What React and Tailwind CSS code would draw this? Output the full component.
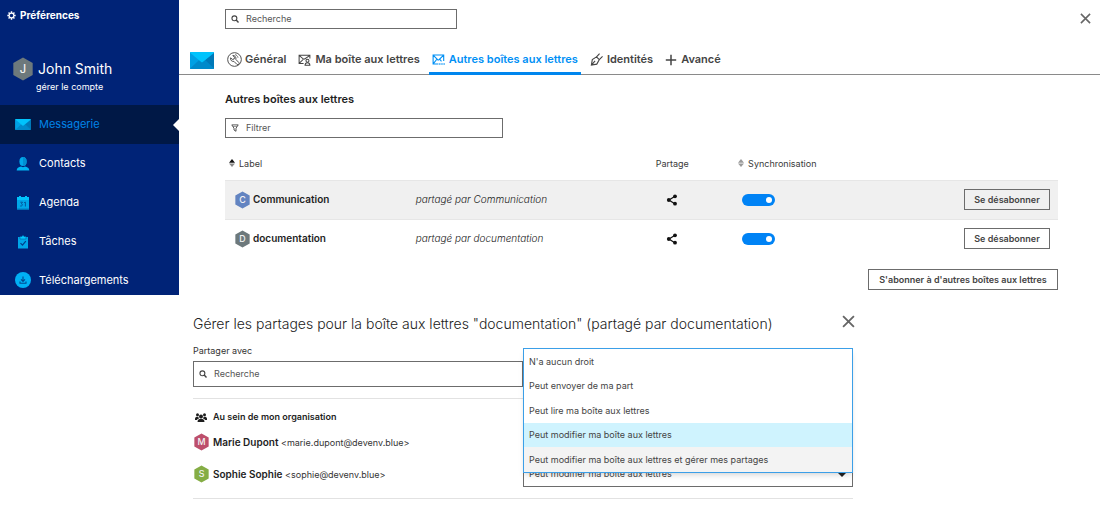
import React, { useState } from "react";

function Hexagon({ letter, color, className, textSize = 12 }) {
  return (
    <svg viewBox="0 0 22 26" className={className} role="img" aria-label={letter}>
      <path d="M11 .5 21.5 6.5v13L11 25.5.5 19.5v-13z" fill={color} />
      <text x="11" y="17.4" textAnchor="middle" fontSize={textSize} fontWeight="500" fill="#f3f3f3" fontFamily="Inter, sans-serif">
        {letter}
      </text>
    </svg>
  );
}

function Envelope({ className }) {
  return (
    <svg viewBox="0 0 24 17" className={className} aria-hidden="true">
      <rect width="24" height="17" rx="1" fill="#0096dc" />
      <path d="M0 16.5 9 8h6l9 8.500V17H0z" fill="#008acb" />
      <path d="M0 1v15.500L9 8z" fill="#00a0e4" />
      <path d="M24 1v15.500L15 8z" fill="#0079b8" />
      <path d="M0 .8A.8.800 0 0 1 .8 0h22.400a.8.800 0 0 1 .8.800L12.800 10a1.300 1.300 0 0 1-1.600 0z" fill="#00c3fc" />
    </svg>
  );
}

function ContactIcon({ className }) {
  return (
    <svg viewBox="0 0 16 16" className={className} aria-hidden="true">
      <ellipse cx="8" cy="5.500" rx="3.600" ry="4.500" fill="#00a8ea" />
      <path d="M8 1a3.600 4.500 0 0 1 0 9z" fill="#0090d2" />
      <path d="M1.700 14.500c0-2.800 2-3.500 4.300-4l2 .8 2-.8c2.300.5 4.300 1.200 4.300 4z" fill="#00b4f2" />
    </svg>
  );
}

function AgendaIcon({ className }) {
  return (
    <svg viewBox="0 0 16 16" className={className} aria-hidden="true">
      <path d="M2 3h12v11.500H2z" fill="#00a6e8" />
      <path d="M2 2h2V1h2v1h4V1h2v1h2v3H2z" fill="#00c3fc" />
      <path d="M2 13.500h12v1H2z" fill="#007fbf" />
      <path d="M5.300 7.200h2.200L6.400 8.800c1.600.1 1.400 2.700-1.200 2.200M9.100 7.700l1.300-.6v4.400" fill="none" stroke="#00589c" />
    </svg>
  );
}

function TaskIcon({ className }) {
  return (
    <svg viewBox="0 0 16 16" className={className} aria-hidden="true">
      <path d="M3 3h10v11.500H3z" fill="#00a6e8" />
      <path d="M5 2.500h2a1 1 0 0 1 2 0h2V5H5z" fill="#00c9ff" stroke="#004d98" strokeWidth=".5" />
      <path d="m5.500 9.200 2 2 3.300-4" fill="none" stroke="#003f89" strokeWidth="1.200" />
    </svg>
  );
}

function DownloadIcon({ className }) {
  return (
    <svg viewBox="0 0 16 16" className={className} aria-hidden="true">
      <circle cx="8" cy="8" r="8" fill="#00b0f5" />
      <path d="M8 4.500v4.700M6 7.400l2 2 2-2M5 9.500v1.700h6V9.500" fill="none" stroke="#00488f" strokeWidth="1.100" />
    </svg>
  );
}

function GearIcon({ className }) {
  return (
    <svg viewBox="0 0 16 16" className={className} fill="none" stroke="currentColor" aria-hidden="true">
      <circle cx="8" cy="8" r="4.200" strokeWidth="2" />
      <path d="M8 .6v3M8 12.400v3M.6 8h3M12.400 8h3M2.800 2.800l2 2M11.200 11.200l2 2M13.200 2.800l-2 2M4.800 11.200l-2 2" strokeWidth="2.600" />
    </svg>
  );
}

function SearchIcon({ className }) {
  return (
    <svg viewBox="0 0 16 16" className={className} fill="none" stroke="currentColor" aria-hidden="true">
      <circle cx="6.800" cy="6.600" r="4.900" strokeWidth="2.200" />
      <path d="m10.400 10.200 4.600 4.800" strokeWidth="2.800" />
    </svg>
  );
}

function FilterIcon({ className }) {
  return (
    <svg viewBox="0 0 16 16" className={className} fill="none" stroke="currentColor" strokeWidth="1.800" aria-hidden="true">
      <path d="M1.600 1.800h12.800L10 8.500v6L6 12V8.500z" />
      <path d="M4 5h8" strokeWidth="1" />
    </svg>
  );
}

function CrossIcon({ className }) {
  return (
    <svg viewBox="0 0 12 12" className={className} fill="none" stroke="currentColor" aria-hidden="true">
      <path d="m1 1 10 10M11 1 1 11" strokeWidth="1.700" />
    </svg>
  );
}

function WrenchIcon({ className }) {
  return (
    <svg viewBox="0 0 16 16" className={className} fill="none" stroke="currentColor" aria-hidden="true">
      <circle cx="8" cy="8" r="7.300" strokeWidth="1" />
      <path
        d="M6.200 3.800 8 5.600 7.600 7.500l-1.900.4L3.900 6.200c-.7 2.200 1.200 4.300 3.500 3.800l3.300 3.300c1.300 1 3-.8 2-2L9.500 8c.5-2.600-1.300-4.600-3.300-4.200z"
        strokeWidth="1"
      />
      <path d="M8.600 2.800c1.600.3 2.900 1.600 3.100 3.300" strokeWidth=".8" />
    </svg>
  );
}

function MyMailboxIcon({ className }) {
  return (
    <svg viewBox="0 0 14 14" className={className} fill="none" stroke="currentColor" strokeWidth="1.100" aria-hidden="true">
      <path d="M6 11.300H1.200V2.500h11.600V6M1.500 2.800 5.800 6.500h1.400l5.300-3.700M1.500 11l4-4" />
      <circle cx="10.200" cy="8.300" r="1.600" />
      <path d="M7.600 13.300c.1-3.700 5.100-3.700 5.200 0z" />
    </svg>
  );
}

function OtherMailboxesIcon({ className }) {
  return (
    <svg viewBox="0 0 14 14" className={className} fill="none" stroke="currentColor" strokeWidth="1.200" aria-hidden="true">
      <path d="M7 11.800H1.200V2.200h11.400v6.500M1.500 2.500l4.800 5h1l5-5M1.500 11.400 5 7M8.600 7l1.600 2" />
      <path d="M7.800 11.800h1.300M10.100 11.800h1.300M12.400 11.800h1.300" strokeWidth="1.600" />
    </svg>
  );
}

function PenIcon({ className }) {
  return (
    <svg viewBox="0 0 14 14" className={className} fill="none" stroke="currentColor" strokeWidth="1.200" aria-hidden="true">
      <path d="M1.500 13 2.500 7 7 4.200l3 3L7.300 12zM1.500 13l4-4.500" />
      <path d="m7 4.200 3.300-3.500M10 7.200l3.500-3.500" />
    </svg>
  );
}

function PlusIcon({ className }) {
  return (
    <svg viewBox="0 0 12 12" className={className} fill="none" stroke="currentColor" aria-hidden="true">
      <path d="M6 .8v10.400M.8 6h10.400" strokeWidth="1.500" />
    </svg>
  );
}

function ShareIcon({ className }) {
  return (
    <svg viewBox="0 0 12 12" className={className} aria-hidden="true">
      <path d="M9 2.200 3 6l6 4" fill="none" stroke="currentColor" strokeWidth="1.200" />
      <circle cx="9" cy="2.300" r="1.900" fill="currentColor" />
      <circle cx="2.800" cy="6" r="1.900" fill="currentColor" />
      <circle cx="9" cy="9.700" r="1.900" fill="currentColor" />
    </svg>
  );
}

function SortIcon({ up = "#9a9a9a", down = "#9a9a9a" }) {
  return (
    <svg viewBox="0 0 6 8" className="h-2 w-1.5 shrink-0" aria-hidden="true">
      <path d="M3 0 6 3.800H0z" fill={up} />
      <path d="M3 8 6 4.400H0z" fill={down} />
    </svg>
  );
}

function PeopleIcon({ className }) {
  return (
    <svg viewBox="0 0 24 18" className={className} fill="currentColor" aria-hidden="true">
      <circle cx="12" cy="7" r="4" />
      <path d="M5 18c0-5 3-6.500 7-6.500s7 1.500 7 6.500z" />
      <circle cx="5" cy="3.500" r="3" />
      <circle cx="19" cy="3.500" r="3" />
      <path d="M0 11.500C0 8.500 2 7.300 5 7.300h1.800c0 1.500.5 2.800 1.300 3.700C6 11.700 4.500 12.600 3.800 14H0zM24 11.500c0-3-2-4.200-5-4.200h-1.800c0 1.500-.5 2.800-1.300 3.700 2.100.7 3.600 1.600 4.300 3H24z" />
    </svg>
  );
}

const apps = [
  { name: "Messagerie", icon: Envelope, size: "w-4 h-[11px]", active: true },
  { name: "Contacts", icon: ContactIcon, size: "size-4" },
  { name: "Agenda", icon: AgendaIcon, size: "size-4" },
  { name: "Tâches", icon: TaskIcon, size: "size-4" },
  { name: "Téléchargements", icon: DownloadIcon, size: "size-4" },
];

const tabs = [
  { name: "Général", icon: WrenchIcon, size: "size-[15px]", gap: "gap-[3px]" },
  { name: "Ma boîte aux lettres", icon: MyMailboxIcon, size: "size-[13px]", gap: "gap-1" },
  { name: "Autres boîtes aux lettres", icon: OtherMailboxesIcon, size: "size-[13px]", gap: "gap-1", active: true },
  { name: "Identités", icon: PenIcon, size: "size-[13px]", gap: "gap-1" },
  { name: "Avancé", icon: PlusIcon, size: "size-3", gap: "gap-1" },
];

const mailboxes = [
  { name: "Communication", letter: "C", color: "#6384c1", row: "bg-[#f0f0f0] border-y border-[#e6e6e6]" },
  { name: "documentation", letter: "D", color: "#6d797c", row: "" },
];

const people = [
  { name: "Marie Dupont", email: "marie.dupont@devenv.blue", letter: "M", color: "#bd4f6c" },
  { name: "Sophie Sophie", email: "sophie@devenv.blue", letter: "S", color: "#85ad45" },
];

const rights = [
  "N'a aucun droit",
  "Peut envoyer de ma part",
  "Peut lire ma boîte aux lettres",
  "Peut modifier ma boîte aux lettres",
  "Peut modifier ma boîte aux lettres et gérer mes partages",
];

function Sidebar() {
  return (
    <aside className="w-[179px] shrink-0 bg-[#002377] text-white">
      <h1 className="flex h-[30px] items-center gap-1 pl-[7px] text-[10px] font-bold">
        <GearIcon className="size-[9px]" />
        Préférences
      </h1>
      <div className="flex h-[75px] items-start gap-1 pt-[27px] pl-3">
        <Hexagon letter="J" color="#6d797c" className="h-6 w-[22px]" />
        <div className="leading-none">
          <div className="text-[14px] leading-6">John Smith</div>
          <a href="#compte" className="-ml-0.5 block text-[9px] leading-3">gérer le compte</a>
        </div>
      </div>
      <nav>
        {apps.map(({ name, icon: Icon, size, active }) => (
          <a
            key={name}
            href={"#" + name}
            className={
              "relative flex h-[39px] items-center gap-2 pl-[15px] text-[11px] last:h-[34px] last:pt-1 " +
              (active ? "bg-[#001846] text-[#0084e8]" : "")
            }
          >
            <Icon className={"shrink-0 " + size} />
            {name}
            {active && (
              <svg viewBox="0 0 6 12" className="absolute right-0 h-3 w-1.5" aria-hidden="true">
                <path d="M6 0v12L0 6z" fill="#fff" />
              </svg>
            )}
          </a>
        ))}
      </nav>
    </aside>
  );
}

function Field({ icon: Icon, label, className }) {
  return (
    <label className={"flex items-center gap-[7px] border border-[#6c6c6c] bg-white px-[5px] text-[#444] " + className}>
      <Icon className="size-2 shrink-0" />
      <input
        type="text"
        aria-label={label}
        placeholder={label}
        className="min-w-0 flex-1 text-[9px] outline-none placeholder:text-[#555]"
      />
    </label>
  );
}

function Toggle({ label }) {
  return (
    <input
      type="checkbox"
      aria-label={label}
      defaultChecked
      className="flex h-3 w-[33px] appearance-none items-center rounded-full bg-[#9a9a9a] px-[3px] before:size-1.5 before:rounded-full before:bg-white checked:justify-end checked:bg-[#0083f5]"
    />
  );
}

function MailboxTable() {
  return (
    <table className="mt-[9px] w-full table-fixed border-collapse text-[9px] text-[#3a3a3a]">
      <colgroup>
        <col className="w-[22.9%]" />
        <col className="w-[27.6%]" />
        <col className="w-[11.1%]" />
        <col className="w-[14%]" />
        <col />
      </colgroup>
      <thead>
        <tr className="h-[33px] text-left">
          <th className="pl-1 font-normal">
            <button type="button" className="flex items-center gap-1"><SortIcon up="#111" down="#8a8a8a" />Label</button>
          </th>
          <th aria-label="Propriétaire" />
          <th className="pl-2.5 font-normal">Partage</th>
          <th className="font-normal">
            <button type="button" className="flex items-center gap-1"><SortIcon />Synchronisation</button>
          </th>
          <th aria-label="Actions" />
        </tr>
      </thead>
      <tbody>
        {mailboxes.map((m) => (
          <tr key={m.name} className={"h-[39px] " + m.row}>
            <td className="pl-2.5">
              <div className="flex items-center gap-[3px] text-[10px] font-semibold text-[#1e1e1e]">
                <Hexagon letter={m.letter} color={m.color} className="h-[18px] w-[15px] shrink-0" textSize={13} />
                {m.name}
              </div>
            </td>
            <td className="text-[10px] font-light text-[#222] italic">partagé par {m.name}</td>
            <td className="pl-5">
              <button type="button" aria-label={"Partager " + m.name} className="flex text-[#111]">
                <ShareIcon className="size-3" />
              </button>
            </td>
            <td className="pl-1"><Toggle label={"Synchroniser " + m.name} /></td>
            <td className="pr-2">
              <button type="button" className="ml-auto block h-[21px] w-[86px] border border-[#6c6c6c] text-[9px] font-semibold text-[#444]">
                Se désabonner
              </button>
            </td>
          </tr>
        ))}
      </tbody>
    </table>
  );
}

function Preferences() {
  return (
    <main className="min-w-0 flex-1">
      <div className="flex h-[37px] items-center justify-between pr-[9px] pl-[46px]">
        <Field icon={SearchIcon} label="Recherche" className="h-5 w-[232px]" />
        <button type="button" aria-label="Fermer les préférences" className="text-[#666]"><CrossIcon className="size-[11px]" /></button>
      </div>
      <div className="flex h-[38px] items-stretch gap-1.5 border-b border-[#8a8a8a] pl-[11px]">
        <Envelope className="mr-1 mb-[5px] h-[17px] w-6 shrink-0 self-end" />
        {tabs.map(({ name, icon: Icon, size, gap, active }) => (
          <button
            key={name}
            type="button"
            className={
              "-mb-px flex items-center border-b-[3px] px-[3px] pt-2.5 text-[11px] font-semibold whitespace-nowrap " + gap +
              (active ? " border-[#0086ee] text-[#0090f5]" : " border-transparent text-[#444]")
            }
          >
            <Icon className={"shrink-0 " + size} />
            {name}
          </button>
        ))}
      </div>
      <div className="flex flex-col pr-[42px] pb-1 pl-[46px]">
        <h2 className="mt-4 text-[11px] leading-4 font-semibold text-[#1e1e1e]">Autres boîtes aux lettres</h2>
        <Field icon={FilterIcon} label="Filtrer" className="mt-[11px] h-5 w-[278px]" />
        <MailboxTable />
        <button type="button" className="mt-[11px] h-[21px] w-[190px] self-end border border-[#6c6c6c] text-[9px] font-semibold whitespace-nowrap text-[#444]">
          S'abonner à d'autres boîtes aux lettres
        </button>
      </div>
    </main>
  );
}

function RightsMenu({ value, onPick }) {
  return (
    <div role="listbox" aria-label="Droits" className="absolute inset-x-0 bottom-[14px] z-10 flex h-[125px] flex-col border border-[#3b9fe8] bg-white shadow-md">
      {rights.map((right) => (
        <button
          key={right}
          type="button"
          role="option"
          aria-selected={right === value}
          onClick={() => onPick(right)}
          className="flex flex-1 items-center pl-[5px] text-left text-[9px] text-[#444] last:bg-[#f3f3f3] aria-selected:bg-[#cff3fe]"
        >
          {right}
        </button>
      ))}
    </div>
  );
}

function SharingPanel() {
  const [value, setValue] = useState(rights[3]);
  return (
    <section className="ml-[193px] w-3/5 text-[#333]">
      <div className="flex items-center justify-between pt-[17px]">
        <h2 className="text-[14px] leading-6 font-light whitespace-nowrap text-[#222]">
          Gérer les partages pour la boîte aux lettres "documentation" (partagé par documentation)
        </h2>
        <button type="button" aria-label="Fermer" className="-mr-0.5 mb-1.5 text-[#666]"><CrossIcon className="size-[13px]" /></button>
      </div>
      <div className="mt-[9px] text-[9px] leading-3">Partager avec</div>
      <Field icon={SearchIcon} label="Recherche" className="mt-1 h-[26px] w-1/2" />
      <div className="mt-[11px] border-y border-[#e2e2e2] pb-[11px]">
        <h3 className="mt-2.5 flex items-center gap-1.5 text-[9px] leading-4 font-semibold text-[#1e1e1e]">
          <PeopleIcon className="ml-0.5 h-[9px] w-3" />
          Au sein de mon organisation
        </h3>
        {people.map((p, i) => (
          <div key={p.name} className={i === 0 ? "mt-1 flex h-[26px]" : "mt-1.5 flex h-[26px]"}>
            <div className="flex w-1/2 items-center pl-px text-[9px]">
              <Hexagon letter={p.letter} color={p.color} className="mr-1 h-[18px] w-[15px] shrink-0" textSize={13} />
              <span><b className="text-[10px] font-semibold text-[#1e1e1e]">{p.name}</b> &lt;{p.email}&gt;</span>
            </div>
            {i === 1 && (
              <div className="relative w-1/2">
                <select
                  aria-label={"Droits de " + p.name}
                  value={value}
                  onChange={(e) => setValue(e.target.value)}
                  className="block h-[26px] w-full appearance-none border border-[#6c6c6c] bg-white pl-[5px] text-[9px] text-[#444]"
                >
                  {rights.map((right) => <option key={right}>{right}</option>)}
                </select>
                <svg viewBox="0 0 8 4" className="absolute top-3 right-[7px] h-1 w-2" aria-hidden="true">
                  <path d="M0 0h8L4 4z" fill="#222" />
                </svg>
                <RightsMenu value={value} onPick={setValue} />
              </div>
            )}
          </div>
        ))}
      </div>
    </section>
  );
}

export default function App() {
  return (
    <div className="min-h-screen bg-white font-['Inter',sans-serif]">
      <div className="flex">
        <Sidebar />
        <Preferences />
      </div>
      <SharingPanel />
    </div>
  );
}
